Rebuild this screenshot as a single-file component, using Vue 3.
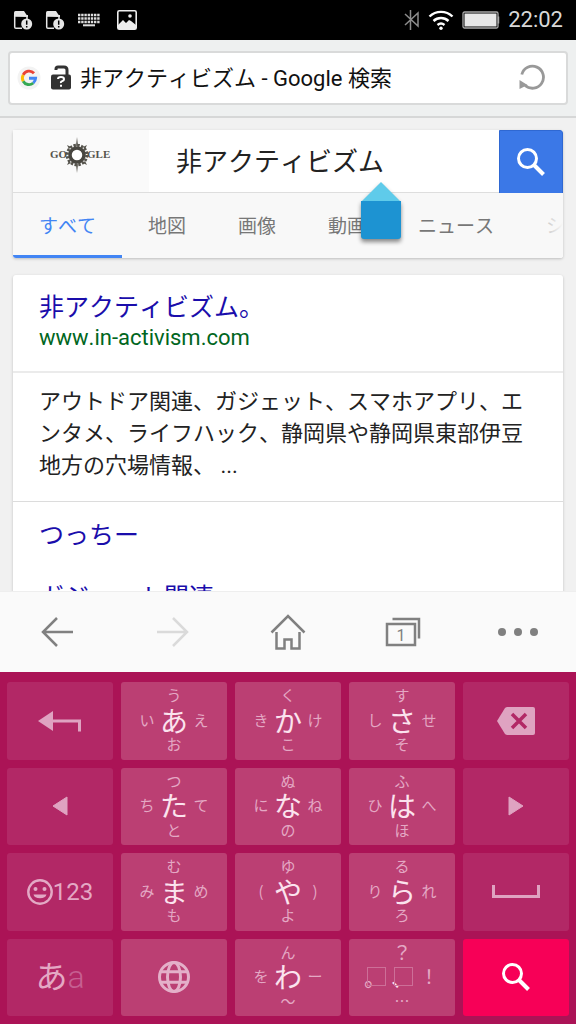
<script setup>
import { ref } from 'vue'

const query = ref('非アクティビズム')
const pageTitle = ref('非アクティビズム - Google 検索')
const tabs = ['すべて', '地図', '画像', '動画', 'ニュース', 'ショッピング']

const kana = (main, left, up, right, down) => ({ type: 'kana', main, left, up, right, down })
const keys = [
  { type: 'undo', label: '戻す' },
  kana('あ', 'い', 'う', 'え', 'お'),
  kana('か', 'き', 'く', 'け', 'こ'),
  kana('さ', 'し', 'す', 'せ', 'そ'),
  { type: 'delete', label: '削除' },
  { type: 'left', label: '左へ' },
  kana('た', 'ち', 'つ', 'て', 'と'),
  kana('な', 'に', 'ぬ', 'ね', 'の'),
  kana('は', 'ひ', 'ふ', 'へ', 'ほ'),
  { type: 'right', label: '右へ' },
  { type: 'symbols', label: '絵文字と数字' },
  kana('ま', 'み', 'む', 'め', 'も'),
  kana('や', '(', 'ゆ', ')', 'よ'),
  kana('ら', 'り', 'る', 'れ', 'ろ'),
  { type: 'space', label: '空白' },
  { type: 'mode', label: '文字種' },
  { type: 'globe', label: '言語' },
  kana('わ', 'を', 'ん', 'ー', '〜'),
  { type: 'punct', label: '句読点' },
  { type: 'search', label: '検索' }
]
const darkKeys = ['undo', 'delete', 'left', 'right', 'symbols', 'space', 'mode']
const keyClass = (k) => [k.type, { dark: darkKeys.includes(k.type) }]
</script>

<template>
  <div class="screen">
    <header class="status">
      <div class="group notes">
        <svg v-for="n in 2" :key="n" width="20" height="20" viewBox="0 0 20 20">
          <path d="M1 6V2.500Q1 1 2.500 1H11l4 6" fill="#e6e6e6" />
          <path d="M1.700 5V17Q1.700 18.300 3 18.300H9M14 5v4M1 6h14" fill="none" stroke="#e6e6e6" stroke-width="1.500" />
          <circle cx="13.700" cy="14" r="5.500" fill="#e6e6e6" />
          <path d="M13.700 10.500v4.200M13.700 16v1.600" stroke="#000" stroke-width="1.500" />
        </svg>
        <svg class="kbd" width="24" height="14" viewBox="0 0 24 14">
          <path d="M1 2H23M1 5.500H23M1 9H23" stroke="#ddd" stroke-width="2.400" stroke-dasharray="2.400 .8" />
          <path d="M6 12.300H18" stroke="#ddd" stroke-width="2" />
        </svg>
        <svg width="20" height="20" viewBox="0 0 20 20">
          <rect x=".8" y=".8" width="18.400" height="18.400" rx="1.500" fill="none" stroke="#eee" stroke-width="1.600" />
          <path d="M1 15l5-5 3 3 3-3 2 1 5 4v4H1z" fill="#eee" />
          <circle cx="13" cy="6" r="1.800" fill="#eee" />
        </svg>
      </div>
      <div class="group">
        <svg width="16" height="22" viewBox="0 0 16 22" fill="none" stroke="#8c8c8c" stroke-width="1.500">
          <path d="M1 5l13 12V4L1 16M6.500 1v20" />
        </svg>
        <svg width="26" height="22" viewBox="0 0 26 22" fill="none" stroke="#fff" stroke-width="2.400">
          <path d="M1.500 7.500a16.500 16.500 0 0 1 23 0M5.500 12a11 11 0 0 1 15 0M9.500 16a5.500 5.500 0 0 1 7 0" />
          <circle cx="13" cy="19.200" r="1.700" fill="#fff" stroke="none" />
        </svg>
        <svg width="38" height="18" viewBox="0 0 38 18">
          <rect x="1" y="1" width="35" height="16" rx="1.500" fill="none" stroke="#aaa" stroke-width="1.300" />
          <rect x="2.500" y="2.500" width="32" height="13" fill="#e8e8e8" />
          <path d="M36.500 5.500v7" stroke="#aaa" stroke-width="1.500" />
        </svg>
        <time class="clock">22:02</time>
      </div>
    </header>

    <div class="toolbar">
      <div class="urlbox">
        <svg class="favicon" width="24" height="24" viewBox="0 0 24 24" fill="none" stroke-width="2.900">
          <circle cx="12" cy="12" r="11.500" fill="#f3f3f3" />
          <path d="M17 7.200A6.600 6.600 0 0 0 6.200 8.900" stroke="#ea4335" />
          <path d="M6.200 8.900a6.600 6.600 0 0 0 0 6.300" stroke="#fbbc05" />
          <path d="M6.200 15.200a6.600 6.600 0 0 0 10.100 1.800" stroke="#34a853" />
          <path d="M16.300 17a6.600 6.600 0 0 0 2.300-4.700H12" stroke="#4285f4" />
        </svg>
        <svg class="lock" width="20" height="26" viewBox="0 0 20 26">
          <path d="M5 5V4Q5 2 7 2h6q3 0 3 3v6" fill="none" stroke="#333" stroke-width="3" />
          <rect y="9.500" width="20" height="15" rx="2" fill="#333" />
          <path d="M7 14q0-2 3-2t3 2.200q0 1.300-1.700 2T10 18M10 19.700v2" fill="none" stroke="#fff" stroke-width="2" />
        </svg>
        <input v-model="pageTitle" class="address" aria-label="アドレス" />
        <button class="reload" aria-label="再読み込み">
          <svg width="28" height="28" viewBox="0 0 28 28">
            <path d="M3.800 10.500a11 11 0 1 1 3.200 10.800" fill="none" stroke="#999" stroke-width="2.800" />
            <path d="M1.500 16v9l8-4z" fill="#999" />
          </svg>
        </button>
      </div>
    </div>

    <main class="page">
      <section class="card searchcard">
        <form class="searchrow" @submit.prevent>
          <a class="logo" href="#" aria-label="Google">
            <svg width="64" height="38" viewBox="0 0 64 38">
              <g fill="#55534d" font-family="Liberation Serif, serif" font-weight="700" font-size="11">
                <text x="1" y="22">GO</text>
                <text x="38" y="22">GLE</text>
              </g>
              <path d="M28 1l1.300 9h-2.600zM28 37l1.300-9h-2.600z" fill="#77756f" />
              <circle cx="28" cy="19" r="9.800" fill="none" stroke="#56544d" stroke-width="3" stroke-dasharray="2.400 1.450" />
              <path d="M18 9l4 2-2 2zM38 9l-2 4-2-2zM18 29l2-4 2 2zM38 29l-4-2 2-2z" fill="#56544d" />
              <circle cx="28" cy="19" r="7" fill="#fff" stroke="#484640" stroke-width="3.500" />
            </svg>
          </a>
          <input v-model="query" class="query" aria-label="検索" />
          <button class="go" aria-label="検索する">
            <svg width="32" height="32" viewBox="0 0 32 32" fill="none" stroke="#fff">
              <circle cx="12.500" cy="12.500" r="9" stroke-width="3" />
              <path d="M19 19l9.500 9.500" stroke-width="4" />
            </svg>
          </button>
        </form>
        <nav class="tabs">
          <a v-for="(t, i) in tabs" :key="t" href="#" :class="{ active: i === 0 }">{{ t }}</a>
        </nav>
        <svg class="handle" width="42" height="60" viewBox="0 0 42 60">
          <path d="M1 21L21 1l20 20z" fill="#5fcbea" />
          <path d="M1 20h40v35q0 3-3 3H4q-3 0-3-3z" fill="#1d93d2" />
        </svg>
      </section>

      <article class="card results">
        <div class="result-head">
          <a class="title" href="#">非アクティビズム。</a>
          <cite>www.in-activism.com</cite>
        </div>
        <p>アウトドア関連、ガジェット、スマホアプリ、エンタメ、ライフハック、静岡県や静岡県東部伊豆地方の穴場情報、 ...</p>
        <div class="sublinks">
          <a class="title" href="#">つっちー</a>
          <a class="title" href="#">ガジェット関連</a>
        </div>
      </article>
    </main>

    <nav class="bottombar">
      <button aria-label="戻る">
        <svg width="34" height="34" viewBox="0 0 34 34"><path d="M16 3L2 17l14 14M2 17h30" /></svg>
      </button>
      <button class="off" aria-label="進む" disabled>
        <svg width="34" height="34" viewBox="0 0 34 34"><path d="M17 3l14 14-14 14M31 17H1" /></svg>
      </button>
      <button aria-label="ホーム">
        <svg width="36" height="38" viewBox="0 0 36 38"><path d="M1.500 19.500L18 3l16.500 16.500M6.500 19v16.500h8V26.500h7v9h8V19" /></svg>
      </button>
      <button aria-label="タブ">
        <svg width="36" height="32" viewBox="0 0 36 32">
          <path d="M2 8h28v21H2zM7.500 3H34v19.500" />
          <text x="16" y="25" text-anchor="middle">1</text>
        </svg>
      </button>
      <button aria-label="メニュー">
        <svg width="40" height="10" viewBox="0 0 40 10">
          <g fill="#808080" stroke="none"><circle cx="4" cy="5" r="4" /><circle cx="20" cy="5" r="4" /><circle cx="36" cy="5" r="4" /></g>
        </svg>
      </button>
    </nav>

    <div class="keyboard">
      <button v-for="k in keys" :key="k.main || k.type" class="key" :class="keyClass(k)" :aria-label="k.label">
        <span v-if="k.type === 'kana'" class="flick">
          <span class="up">{{ k.up }}</span>
          <span class="left-char">{{ k.left }}</span>
          <span class="main">{{ k.main }}</span>
          <span class="right-char">{{ k.right }}</span>
          <span class="down">{{ k.down }}</span>
        </span>
        <span v-else-if="k.type === 'punct'" class="flick marks">
          <span class="up">？</span>
          <span class="left-char boxed">。</span>
          <span class="main boxed">、</span>
          <span class="right-char">！</span>
          <span class="down">…</span>
        </span>
        <svg v-else-if="k.type === 'undo'" width="44" height="22" viewBox="0 0 44 22">
          <path d="M0 11L15 1v20z" fill="#dfa3c1" />
          <path d="M14 11h27.500v10.500" fill="none" stroke="#dfa3c1" stroke-width="3" />
        </svg>
        <svg v-else-if="k.type === 'delete'" width="38" height="30" viewBox="0 0 38 30">
          <path d="M0 15L8 2q1-1 2.500-1H36q2 0 2 2v24q0 2-2 2H10.500Q9 29 8 28z" fill="#dfa3c1" />
          <path d="M15 8l14 14M29 8L15 22" stroke="#b22866" stroke-width="3.500" />
        </svg>
        <svg v-else-if="k.type === 'left'" width="16" height="20" viewBox="0 0 16 20">
          <path d="M15 1v18L1 10z" fill="#dfa3c1" stroke="#dfa3c1" stroke-linejoin="round" />
        </svg>
        <svg v-else-if="k.type === 'right'" width="16" height="20" viewBox="0 0 16 20">
          <path d="M1 1v18l14-9z" fill="#dfa3c1" stroke="#dfa3c1" stroke-linejoin="round" />
        </svg>
        <span v-else-if="k.type === 'symbols'" class="symbols-label">
          <svg width="26" height="26" viewBox="0 0 26 26" fill="#e3a9c5">
            <circle cx="13" cy="13" r="11.700" fill="none" stroke="#e3a9c5" stroke-width="2.400" />
            <circle cx="8.500" cy="10" r="2" /><circle cx="17.500" cy="10" r="2" />
            <path d="M6.500 15.500h13a6.600 4.600 0 0 1-13 0z" />
          </svg>123
        </span>
        <svg v-else-if="k.type === 'space'" width="48" height="14" viewBox="0 0 48 14">
          <path d="M1.500 0v11.500h45V0" fill="none" stroke="#dfa3c1" stroke-width="3" />
        </svg>
        <span v-else-if="k.type === 'mode'" class="mode-label">あ<span>a</span></span>
        <svg v-else-if="k.type === 'globe'" width="34" height="34" viewBox="0 0 34 34" fill="none" stroke="#e4b0c9" stroke-width="3">
          <circle cx="17" cy="17" r="14.500" />
          <ellipse cx="17" cy="17" rx="6.500" ry="14.500" />
          <path d="M4 11.800h26M4 22.200h26" />
        </svg>
        <svg v-else width="30" height="30" viewBox="0 0 30 30" fill="none" stroke="#fff">
          <circle cx="11.500" cy="11.500" r="9" stroke-width="3" />
          <path d="M18 18l9.500 9.500" stroke-width="4" />
        </svg>
      </button>
    </div>
  </div>
</template>

<style>
body {
  margin: 0;
}
</style>

<style scoped>
* {
  box-sizing: border-box;
}
.screen {
  display: flex;
  flex-direction: column;
  height: 100vh;
  overflow: hidden;
  background: #f1f1f1;
  font-family: Roboto, "Noto Sans CJK JP", sans-serif;
  font-kerning: none;
  color: #222;
}
svg {
  display: block;
  flex: none;
}
button {
  display: flex;
  align-items: center;
  justify-content: center;
  border: 0;
  padding: 0;
  background: none;
  font-family: inherit;
}
input {
  border: 0;
  outline: 0;
  padding: 0;
  min-width: 0;
  background: none;
  font-family: inherit;
  font-kerning: none;
}
a {
  text-decoration: none;
}

.status {
  flex: none;
  display: flex;
  justify-content: space-between;
  align-items: center;
  height: 40px;
  padding: 0 13px;
  background: #000;
}
.group {
  display: flex;
  align-items: center;
  gap: 8px;
}
.notes {
  gap: 12px;
}
.kbd {
  margin-right: 4px;
}
.clock {
  color: #d8d8d8;
  font-size: 22px;
  line-height: 24px;
}

.toolbar {
  flex: none;
  padding: 11px 8px;
  background: #eef0f0;
  border-bottom: 2px solid #d6d7d7;
}
.urlbox {
  display: flex;
  align-items: center;
  height: 54px;
  padding: 0 20px 0 7px;
  background: #fff;
  border: 2px solid #d9dada;
  border-radius: 4px;
}
.lock {
  margin: 0 9px 0 10px;
}
.address {
  flex: 1;
  height: 36px;
  padding-bottom: 4px;
  font-size: 22px;
  color: #111;
}

.page {
  flex: 1;
  min-height: 0;
  overflow: hidden;
  display: flex;
  flex-direction: column;
  gap: 17px;
  padding: 12px 13px 0;
}
.card {
  flex: none;
  border-radius: 3px;
  background: #fff;
  box-shadow: 0 1px 3px rgba(0, 0, 0, 0.22);
}
.searchcard {
  position: relative;
}
.searchrow {
  display: flex;
  height: 63px;
  border-bottom: 1px solid #dedede;
}
.logo {
  flex: none;
  display: flex;
  justify-content: center;
  width: 136px;
  padding-top: 6px;
  background: #fafafa;
}
.query {
  flex: 1;
  padding: 0 0 4px 27px;
  font-size: 26px;
  color: #222;
}
.go {
  flex: none;
  width: 64px;
  height: 64px;
  background: #3b78e7;
  border: 1px solid #2f68d2;
  border-radius: 0 3px 0 0;
}
.tabs {
  position: relative;
  display: flex;
  height: 65px;
  overflow: hidden;
  background: #f8f8f8;
  border-radius: 0 0 3px 3px;
}
.tabs::after {
  content: "";
  position: absolute;
  top: 0;
  right: 0;
  width: 32px;
  height: 100%;
  background: linear-gradient(to right, rgba(248, 248, 248, 0.3), #f8f8f8);
}
.tabs a {
  flex: none;
  height: 65px;
  padding: 2px 26px 0;
  font-size: 19px;
  line-height: 63px;
  color: #777;
}
.tabs .active {
  color: #4285f4;
  border-bottom: 3px solid #4285f4;
}
.handle {
  position: absolute;
  left: 347px;
  top: 51px;
  filter: drop-shadow(0 3px 2px rgba(0, 0, 0, 0.45));
}

.result-head {
  display: flex;
  flex-direction: column;
  align-items: flex-start;
  padding: 17px 26px 19px;
  border-bottom: 2px solid #ebebeb;
}
.title {
  font-size: 25px;
  line-height: 32px;
  color: #1a0dab;
}
cite {
  font-size: 22px;
  line-height: 28px;
  font-style: normal;
  color: #006621;
}
p {
  margin: 0;
  padding: 13px 26px 19px;
  border-bottom: 1px solid #dcdcdc;
  font-size: 22px;
  line-height: 32px;
}
.sublinks {
  display: flex;
  flex-direction: column;
  align-items: flex-start;
  gap: 30px;
  padding: 18px 26px;
}

.bottombar {
  flex: none;
  display: grid;
  grid-template-columns: repeat(5, 1fr);
  height: 81px;
  background: #fafafa;
  border-top: 1px solid #eee;
}
.bottombar svg {
  fill: none;
  stroke: #808080;
  stroke-width: 2.5;
}
.bottombar .off svg {
  stroke: #dadada;
}
.bottombar text {
  font-size: 16px;
  fill: #808080;
  stroke: none;
}

.keyboard {
  flex: none;
  display: grid;
  grid-template-columns: repeat(5, 1fr);
  grid-auto-rows: 1fr;
  gap: 8px;
  height: 352px;
  padding: 10px 7px 8px;
  background: #ab1356;
}
.key {
  min-width: 0;
  background: #bb3f73;
  border-radius: 3px;
  color: #e4a8c4;
}
.key.dark {
  background: #b22866;
}
.key.search {
  background: #f70057;
}
.flick {
  display: grid;
  grid-template-columns: 22px 32px 22px;
  grid-template-rows: 17px 32px 17px;
  grid-template-areas: ". up ." "left main right" ". down .";
  place-items: center;
  padding-bottom: 2px;
  font-family: "Noto Sans CJK JP", sans-serif;
  font-size: 15px;
  line-height: 16px;
}
.up {
  grid-area: up;
}
.left-char {
  grid-area: left;
}
.right-char {
  grid-area: right;
}
.down {
  grid-area: down;
}
.main {
  grid-area: main;
  font-size: 28px;
  line-height: 32px;
  color: #fbe3ee;
}
.marks {
  font-size: 19px;
}
.marks .down {
  font-size: 15px;
}
.marks .boxed {
  position: relative;
  font-size: 22px;
}
.boxed::after {
  content: "";
  position: absolute;
  left: 3px;
  top: 50%;
  width: 17px;
  height: 17px;
  margin-top: -9px;
  border: 1px solid #cd6f98;
}
.symbols-label {
  display: flex;
  align-items: center;
  font-family: Roboto, sans-serif;
  font-size: 24px;
}
.mode-label {
  font-size: 32px;
  line-height: 40px;
}
.mode-label span {
  color: #c65f91;
  font-weight: 300;
}
</style>
